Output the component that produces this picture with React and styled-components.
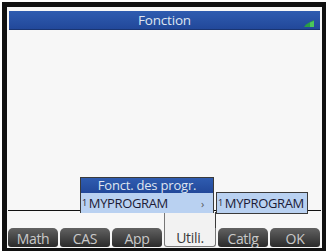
import React from 'react';
import styled, { createGlobalStyle } from 'styled-components';

const GlobalStyle = createGlobalStyle`
  html, body {
    margin: 0;
    padding: 0;
    background: #ffffff;
  }
  * {
    box-sizing: border-box;
  }
`;

const Frame = styled.div`
  width: 326px;
  height: 251px;
  padding: 2px 0 0 2px;
  background: #ffffff;
`;

const Bezel = styled.div`
  height: 100%;
  display: flex;
  padding: 5px 4px 3px 5px;
  background: #101010;
`;

const Screen = styled.div`
  flex: 1;
  position: relative;
  display: flex;
  flex-direction: column;
  background: #f7f7f7;
  font-family: "Open Sans", "Noto Sans", sans-serif;
`;

const TitleBar = styled.div`
  margin: 4px 2px 0 2px;
  height: 19px;
  display: grid;
  grid-template-columns: 1fr auto 1fr;
  align-items: center;
  background: linear-gradient(#2f5cb0, #22489a);
  border-bottom: 1px solid #1a3572;
`;

const Title = styled.span`
  color: #dfe5f0;
  font-size: 13.5px;
  line-height: 18px;
  letter-spacing: -0.2px;
`;

const Indicator = styled.svg`
  justify-self: end;
  margin: 7px 6px 0 0;
`;

const PlotArea = styled.div`
  flex: 1;
  display: flex;
  flex-direction: column;
  justify-content: flex-end;
  padding: 0 1px 17px 1px;
`;

const Axis = styled.div`
  height: 1px;
  background: #111;
`;

const Menu = styled.div`
  position: absolute;
  left: 73px;
  top: 170px;
  width: 134px;
  border: 1px solid #3a3a3a;
  border-bottom: none;
  background: #b9d1f1;
`;

const MenuHeader = styled.div`
  height: 15px;
  background: linear-gradient(#2f5cb0, #22489a);
  color: #dfe5f0;
  font-size: 13px;
  line-height: 14px;
  text-align: center;
  letter-spacing: -0.2px;
`;

const Item = styled.div`
  height: 20px;
  display: flex;
  align-items: center;
  padding-left: 1px;
  color: #1b1b36;
  font-size: 13px;
  letter-spacing: -0.35px;
  background: #b9d1f1;
`;

const Num = styled.span`
  font-size: 9px;
  margin-right: 2px;
  margin-top: -2px;
`;

const Arrow = styled.span`
  margin-left: auto;
  margin-right: 9px;
  color: #555;
  font-size: 11px;
`;

const SubMenu = styled.div`
  position: absolute;
  left: 209px;
  top: 185px;
  width: 92px;
  border: 1px solid #3a3a3a;
`;

const ButtonBar = styled.div`
  display: flex;
  gap: 2px;
  padding: 0 2px 1px 1px;
`;

const SoftKey = styled.div`
  flex: 1;
  height: 19px;
  position: relative;
  display: flex;
  align-items: center;
  justify-content: center;
  padding-top: 1px;
  font-size: 14px;
  letter-spacing: -0.3px;
  border-radius: ${p => (p.$active ? '0 0 3px 3px' : '5px 5px 3px 3px')};
  color: ${p => (p.$active ? '#3a3a3a' : '#c9c9c9')};
  background: ${p =>
    p.$active ? '#f2f2f2' : 'linear-gradient(#626262, #2a2a2a)'};
  border: ${p => (p.$active ? '1px solid #777' : 'none')};
  border-top: none;

  ${p =>
    p.$active &&
    `
    &::before {
      content: '';
      position: absolute;
      left: -1px;
      right: -1px;
      top: -16px;
      height: 16px;
      background: #f2f2f2;
      border-left: 1px solid #777;
      border-right: 1px solid #3a3a3a;
    }
  `}
`;

const keys = ['Math', 'CAS', 'App', 'Utili.', 'Catlg', 'OK'];

const App = () => {
  return (
    <>
      <GlobalStyle />
      <Frame>
        <Bezel>
          <Screen>
            <TitleBar>
              <span />
              <Title>Fonction</Title>
              <Indicator width="10" height="7" viewBox="0 0 10 7">
                <polygon points="0,7 10,7 10,0 6,2 2,4.5" fill="#2a9e44" />
                <polygon points="6,7 10,7 10,1 6,2.5" fill="#4cc75a" />
              </Indicator>
            </TitleBar>
            <PlotArea>
              <Axis />
            </PlotArea>
            <ButtonBar>
              {keys.map(k => (
                <SoftKey key={k} $active={k === 'Utili.'}>
                  {k}
                </SoftKey>
              ))}
            </ButtonBar>
            <Menu>
              <MenuHeader>Fonct. des progr.</MenuHeader>
              <Item>
                <Num>1</Num>MYPROGRAM<Arrow>›</Arrow>
              </Item>
            </Menu>
            <SubMenu>
              <Item>
                <Num>1</Num>MYPROGRAM
              </Item>
            </SubMenu>
          </Screen>
        </Bezel>
      </Frame>
    </>
  );
};

export default App;
